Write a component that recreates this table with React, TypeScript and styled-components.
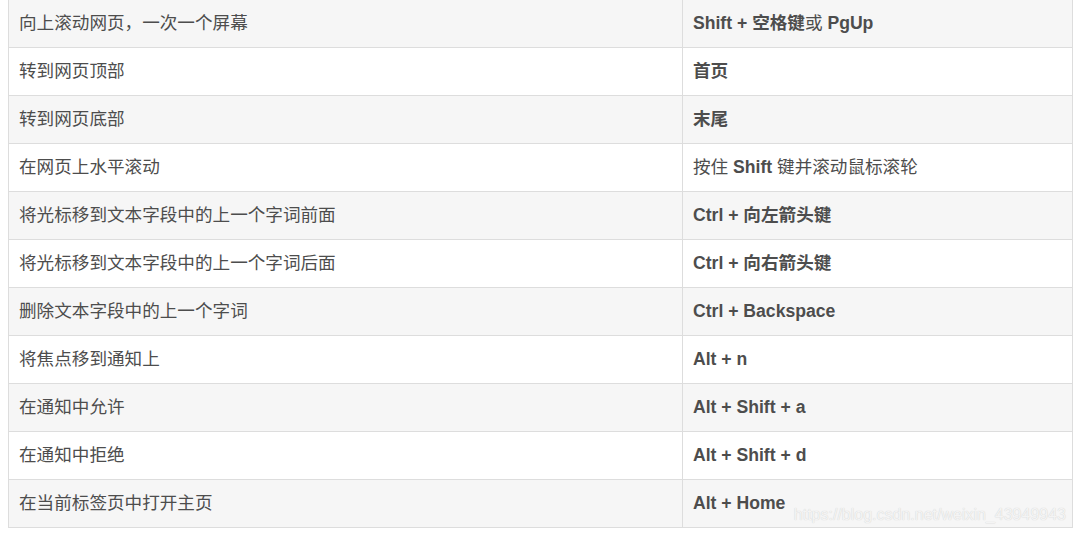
import React from "react";
import styled, { createGlobalStyle } from "styled-components";

const GlobalStyle = createGlobalStyle`
  html, body {
    margin: 0;
    padding: 0;
    background: #fff;
  }
  body {
    font-family: "Liberation Sans", Arial, "Noto Sans CJK SC", sans-serif;
  }
`;

type Shortcut = {
  action: string;
  keys: React.ReactNode;
};

const shortcuts: Shortcut[] = [
  { action: "向上滚动网页，一次一个屏幕", keys: <><b>Shift + 空格键</b>或 <b>PgUp</b></> },
  { action: "转到网页顶部", keys: <b>首页</b> },
  { action: "转到网页底部", keys: <b>末尾</b> },
  { action: "在网页上水平滚动", keys: <>按住 <b>Shift</b> 键并滚动鼠标滚轮</> },
  { action: "将光标移到文本字段中的上一个字词前面", keys: <b>Ctrl + 向左箭头键</b> },
  { action: "将光标移到文本字段中的上一个字词后面", keys: <b>Ctrl + 向右箭头键</b> },
  { action: "删除文本字段中的上一个字词", keys: <b>Ctrl + Backspace</b> },
  { action: "将焦点移到通知上", keys: <b>Alt + n</b> },
  { action: "在通知中允许", keys: <b>Alt + Shift + a</b> },
  { action: "在通知中拒绝", keys: <b>Alt + Shift + d</b> },
  { action: "在当前标签页中打开主页", keys: <b>Alt + Home</b> },
];

export default function App() {
  return (
    <>
      <GlobalStyle />
      <Page>
        <Table>
          <tbody>
            {shortcuts.map((s, i) => (
              <Row key={i} $striped={i % 2 === 0}>
                <ActionCell>{s.action}</ActionCell>
                <KeyCell>{s.keys}</KeyCell>
              </Row>
            ))}
          </tbody>
        </Table>
        <Watermark>https://blog.csdn.net/weixin_43949943</Watermark>
      </Page>
    </>
  );
}

const Page = styled.div`
  position: relative;
  padding: 0 3px 0 8px;
  height: 533px;
  overflow: hidden;
`;

const Table = styled.table`
  width: 1065px;
  margin-top: -1px;
  border-collapse: collapse;
  font-size: 17.6px;
  color: #4d4d4d;
`;

const Row = styled.tr<{ $striped: boolean }>`
  height: 48px;
  background: ${(p) => (p.$striped ? "#f6f6f6" : "#fff")};
`;

const Cell = styled.td`
  border: 1px solid #dddddd;
  padding: 0 10px;
  vertical-align: middle;
  line-height: 1.4;
  font-family: "Liberation Sans", Arial, "Noto Sans CJK SC", sans-serif;

  b {
    font-weight: 700;
    color: #4d4d4d;
  }
`;

const ActionCell = styled(Cell)`
  width: 653px;
`;

const KeyCell = styled(Cell)``;

const Watermark = styled.div`
  position: absolute;
  right: 10px;
  top: 505px;
  font-family: "Liberation Sans", Arial, sans-serif;
  font-size: 16px;
  line-height: 20px;
  color: #f4f4f4;
  text-shadow: 0 0 1px #c8c8c8;
`;
